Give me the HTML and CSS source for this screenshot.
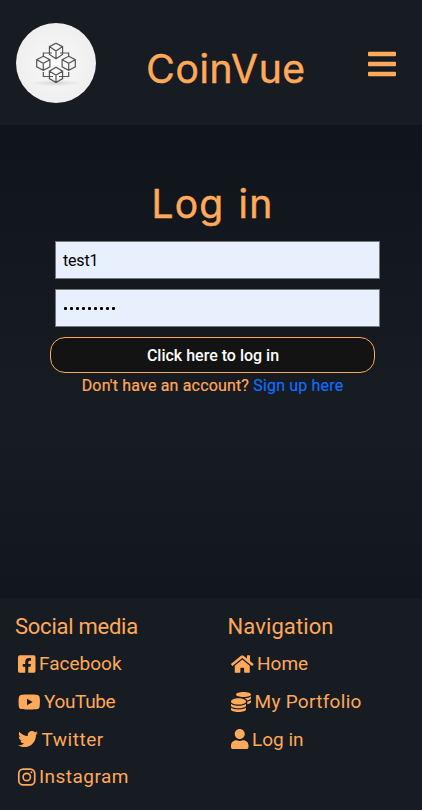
FILE: index.html
```html
<!DOCTYPE html>
<html lang="en">
<head>
<meta charset="utf-8">
<meta name="viewport" content="width=device-width, initial-scale=1">
<title>CoinVue</title>
<link rel="stylesheet" href="styles.css">
</head>
<body>
<header class="header">
  <svg class="logo" viewBox="0 0 80 80" aria-hidden="true">
    <defs>
      <radialGradient id="disc"><stop offset="0" stop-color="#fff"/><stop offset=".45" stop-color="#f4f4f4"/><stop offset="1" stop-color="#efefef"/></radialGradient>
      <radialGradient id="shade"><stop offset="0" stop-color="#d4d4d4"/><stop offset="1" stop-color="#d4d4d4" stop-opacity="0"/></radialGradient>
      <g id="cube"><path d="M0-7 6.6-3.6V3.6L0 7-6.6 3.6V-3.6ZM-6.6-3.6 0 0 6.6-3.6M0 0V7"/></g>
    </defs>
    <circle cx="40" cy="40" r="40" fill="url(#disc)"/>
    <ellipse cx="40" cy="60" rx="24" ry="3" fill="url(#shade)"/>
    <g fill="none" stroke="#555" stroke-width="1.2">
      <path d="M27.3 33V30H36M52.7 33V30H44M27.3 49V53.5H37M52.7 49V53.5H43"/>
      <path d="M33.4 23.6V31.5L40 35.8 46.6 31.5V23.6L40 20.2ZM33.4 23.6 40 28 46.6 23.6M40 28V35.8"/>
      <use href="#cube" x="27.3" y="40.3"/>
      <use href="#cube" x="52.7" y="40.3"/>
      <path d="M33.4 48.2V55.6L40 59.6 46.6 55.6V48.2L40 44.2ZM33.4 48.2 40 52 46.6 48.2M40 52V59.6"/>
    </g>
  </svg>
  <h1 class="brand">CoinVue</h1>
  <button class="menu" aria-label="Menu"><svg viewBox="0 0 448 512"><path d="M16 132h416a16 16 0 0 0 16-16V76a16 16 0 0 0-16-16H16A16 16 0 0 0 0 76v40a16 16 0 0 0 16 16zm0 160h416a16 16 0 0 0 16-16v-40a16 16 0 0 0-16-16H16a16 16 0 0 0-16 16v40a16 16 0 0 0 16 16zm0 160h416a16 16 0 0 0 16-16v-40a16 16 0 0 0-16-16H16a16 16 0 0 0-16 16v40a16 16 0 0 0 16 16z"/></svg></button>
</header>
<main class="main">
  <h2 class="title">Log in</h2>
  <form class="form">
    <div class="field user">test1</div>
    <div class="field dots"><i></i><i></i><i></i><i></i><i></i><i></i><i></i><i></i><i></i></div>
    <button type="button" class="submit"><span>Click here to log in</span></button>
  </form>
  <p class="signup"><span class="ask">Don't have an account?</span> <a class="link">Sign up here</a></p>
</main>
<footer class="footer">
  <section class="col">
    <h3 class="head social">Social media</h3>
    <a class="item facebook"><svg class="w448" viewBox="0 0 448 512"><path d="M400 32H48A48 48 0 0 0 0 80v352a48 48 0 0 0 48 48h137.25V327.69h-63V256h63v-54.64c0-62.15 37-96.48 93.67-96.48 27.14 0 55.52 4.84 55.52 4.84v61h-31.27c-30.81 0-40.42 19.12-40.42 38.73V256h68.78l-11 71.69h-57.78V480H400a48 48 0 0 0 48-48V80a48 48 0 0 0-48-48z"/></svg><span>Facebook</span></a>
    <a class="item youtube"><svg class="w576" viewBox="0 0 576 512"><path d="M549.655 124.083c-6.281-23.65-24.787-42.276-48.284-48.597C458.781 64 288 64 288 64S117.22 64 74.629 75.486c-23.497 6.322-42.003 24.947-48.284 48.597-11.412 42.867-11.412 132.305-11.412 132.305s0 89.438 11.412 132.305c6.281 23.65 24.787 41.5 48.284 47.821C117.22 448 288 448 288 448s170.78 0 213.371-11.486c23.497-6.321 42.003-24.171 48.284-47.821 11.412-42.867 11.412-132.305 11.412-132.305s0-89.438-11.412-132.305zm-317.51 213.508V175.185l142.739 81.205-142.739 81.201z"/></svg><span>YouTube</span></a>
    <a class="item twitter"><svg class="w512" viewBox="0 0 512 512"><path d="M459.37 151.716c.325 4.548.325 9.097.325 13.645 0 138.72-105.583 298.558-298.558 298.558-59.452 0-114.68-17.219-161.137-47.106 8.447.974 16.568 1.299 25.34 1.299 49.055 0 94.213-16.568 130.274-44.832-46.132-.975-84.792-31.188-98.112-72.772 6.498.974 12.995 1.624 19.818 1.624 9.421 0 18.843-1.3 27.614-3.573-48.081-9.747-84.143-51.98-84.143-102.985v-1.299c13.969 7.797 30.214 12.67 47.431 13.319-28.264-18.843-46.781-51.005-46.781-87.391 0-19.492 5.197-37.36 14.294-52.954 51.655 63.675 129.3 105.258 216.365 109.807-1.624-7.797-2.599-15.918-2.599-24.04 0-57.828 46.782-104.934 104.934-104.934 30.213 0 57.502 12.67 76.67 33.137 23.715-4.548 46.456-13.32 66.599-25.34-7.798 24.366-24.366 44.833-46.132 57.827 21.117-2.273 41.584-8.122 60.426-16.243-14.292 20.791-32.161 39.308-52.628 54.253z"/></svg><span>Twitter</span></a>
    <a class="item instagram"><svg class="w448" viewBox="0 0 448 512"><rect x="20" y="52" width="408" height="408" rx="112" fill="none" stroke="currentColor" stroke-width="44"/><circle cx="224" cy="256" r="94" fill="none" stroke="currentColor" stroke-width="42"/><circle cx="343" cy="136" r="27"/></svg><span>Instagram</span></a>
  </section>
  <section class="col">
    <h3 class="head nav">Navigation</h3>
    <a class="item home"><svg class="w576" viewBox="0 0 576 512"><path d="M280.37 148.26L96 300.11V464a16 16 0 0 0 16 16l112.06-.29a16 16 0 0 0 15.92-16V368a16 16 0 0 1 16-16h64a16 16 0 0 1 16 16v95.64a16 16 0 0 0 16 16.05L464 480a16 16 0 0 0 16-16V300L295.67 148.26a12.19 12.19 0 0 0-15.3 0zM571.6 251.47L488 182.56V44.05a12 12 0 0 0-12-12h-56a12 12 0 0 0-12 12v72.61L318.47 43a48 48 0 0 0-61 0L4.34 251.47a12 12 0 0 0-1.6 16.9l25.5 31A12 12 0 0 0 45.15 301l235.22-193.74a12.19 12.19 0 0 1 15.3 0L530.9 301a12 12 0 0 0 16.9-1.6l25.5-31a12 12 0 0 0-1.7-16.93z"/></svg><span>Home</span></a>
    <a class="item portfolio"><svg class="w512" viewBox="0 0 512 512"><path d="M0 405.3V448c0 35.3 86 64 192 64s192-28.7 192-64v-42.7C342.7 434.4 267.2 448 192 448S41.3 434.4 0 405.3zM320 128c106 0 192-28.7 192-64S426 0 320 0 128 28.7 128 64s86 64 192 64zM0 300.4V352c0 35.3 86 64 192 64s192-28.7 192-64v-51.6c-41.3 34-116.9 51.6-192 51.6S41.3 334.4 0 300.4zm416 11c57.3-11.1 96-31.7 96-55.4v-42.7c-23.2 16.4-57.3 27.6-96 34.5v63.6zM192 160C86 160 0 195.8 0 240s86 80 192 80 192-35.8 192-80-86-80-192-80zm219.3 56.3c60-10.8 100.7-32 100.7-56.3v-42.7c-35.5 25.1-96.5 38.6-160.7 41.8 29.5 14.3 51.2 33.5 60 57.2z"/></svg><span>My Portfolio</span></a>
    <a class="item login"><svg class="w448" viewBox="0 0 448 512"><path d="M224 256c70.7 0 128-57.3 128-128S294.7 0 224 0 96 57.3 96 128s57.3 128 128 128zm89.6 32h-16.7c-22.2 10.2-46.9 16-72.9 16s-50.6-5.8-72.9-16h-16.7C60.2 288 0 348.2 0 422.4V464c0 26.5 21.5 48 48 48h352c26.5 0 48-21.5 48-48v-41.6c0-74.2-60.2-134.4-134.4-134.4z"/></svg><span>Log in</span></a>
  </section>
</footer>
</body>
</html>
```
FILE: styles.css
```css
* { box-sizing: border-box; }
body {
  margin: 0;
  height: 810px;
  display: flex;
  flex-direction: column;
  overflow: hidden;
  background: #171b22;
  color: #ffa95a;
  font-family: Roboto, "Noto Sans", sans-serif;
}
h1, h2, h3, p { margin: 0; font-weight: 400; }
button { font: inherit; }
.header {
  height: 125px;
  flex: none;
  padding: 0 26px 0 16px;
  display: flex;
  align-items: center;
  justify-content: space-between;
}
.logo { width: 80px; height: 80px; }
.brand, .title { font: 400 39px/60px Inter, sans-serif; -webkit-text-stroke: 0.5px currentColor; }
.brand { letter-spacing: 0.6px; margin: 12px 12px 0 0; }
.menu { border: 0; padding: 0; background: none; color: inherit; width: 28px; height: 32px; margin-top: 3px; }
.menu svg { display: block; width: 28px; height: 32px; fill: currentColor; }
.main {
  height: 473px;
  flex: none;
  padding-top: 49px;
  background: linear-gradient(#10141b, #171b22 60%, #12161d);
}
.title { text-align: center; padding-left: 3px; letter-spacing: 1.2px; word-spacing: 2px; }
.form { margin: 7px 47px 0 50px; display: flex; flex-direction: column; }
.field {
  width: 325px;
  height: 38px;
  margin: 0 0 10px 5px;
  padding: 0 7px;
  border: 1px solid #767676;
  background: #e8f0fe;
  color: #000;
  display: flex;
  align-items: center;
  font-size: 16px;
}
.user { letter-spacing: -0.2px; }
.dots { gap: 3px; padding: 1px 0 0 8px; }
.dots i { width: 3px; height: 3px; border-radius: 1px; background: #000; }
.submit {
  width: 325px;
  height: 36px;
  padding: 0 0 0 1px;
  border: 1px solid #ffa95a;
  border-radius: 15px;
  background: #131313;
  color: #fff;
  font-size: 16px;
  font-weight: 500;
}
.signup { font-size: 16px; line-height: 24px; text-align: center; padding: 1px 0 0 3px; letter-spacing: 0.17px; -webkit-text-stroke: 0.2px currentColor; }
.link { color: #0d6efd; }
.footer { flex: 1; display: grid; grid-template-columns: 212.5px 1fr; padding: 13px 0 0 15px; }
.col { display: flex; flex-direction: column; }
.head { font-size: 22px; line-height: 32px; margin-bottom: 2px; }
.social { letter-spacing: -0.25px; }
.nav { letter-spacing: 0.1px; }
.item { height: 37.7px; display: flex; align-items: center; gap: 3.5px; padding-left: 3px; font-size: 19px; }
.col + .col .item { gap: 4px; }
.item svg { height: 20px; fill: currentColor; overflow: visible; }
.youtube span { letter-spacing: -0.35px; }
.twitter span { letter-spacing: 0.5px; }
.instagram span { letter-spacing: 0.45px; }
.portfolio span { letter-spacing: 0.3px; }
.w448 { width: 17.5px; }
.w512 { width: 20px; }
.w576 { width: 22.5px; }
```
